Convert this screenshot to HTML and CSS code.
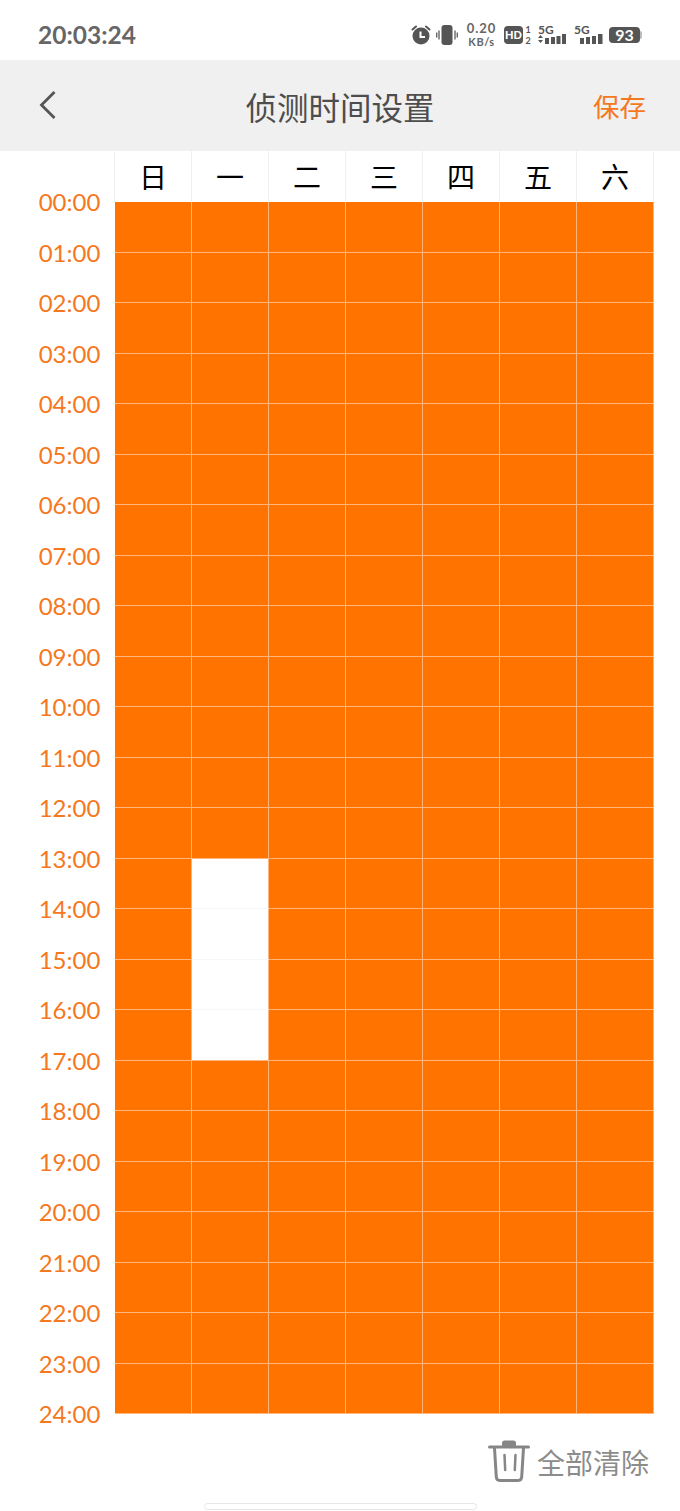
FILE: index.html
```html
<!DOCTYPE html>
<html lang="zh-CN">
<head>
    <meta charset="UTF-8">
    <title>侦测时间设置</title>
    <link rel="stylesheet" href="styles.css">
</head>
<body>
    <div class="status-bar">
        <span class="clock">20:03:24</span>
        <div class="status-icons">
            <svg class="icon-alarm" width="20" height="20" viewBox="0 0 20 20">
                <circle cx="10" cy="11" r="8.500" fill="#555"/>
                <path d="M1.500 4.500 5 1.500M18.500 4.500 15 1.500" stroke="#555" stroke-width="2" stroke-linecap="round"/>
                <path d="M9.500 6.500v5.500h4.500" fill="none" stroke="#fff" stroke-width="2"/>
            </svg>
            <svg class="icon-vibrate" width="22" height="20" viewBox="0 0 22 20">
                <rect x="5.500" y="0" width="11" height="20" rx="3" fill="#555"/>
                <path d="M3 5.500v9M19 5.500v9M.7 7.500v5M21.300 7.500v5" stroke="#666" stroke-width="1.400"/>
            </svg>
            <div class="speed"><span>0.20</span><span class="speed-unit">KB/s</span></div>
            <span class="hd-box">HD</span>
            <span class="hd-nums"><span>1</span><span>2</span></span>
            <div class="signal signal-first">
                <span class="signal-name">5G</span>
                <svg width="28" height="10" viewBox="0 0 28 10">
                    <path d="M0 4h5L2.500 1zM0 6h5L2.500 9z" fill="#555"/>
                    <rect x="7" y="4" width="4" height="6" fill="#555"/>
                    <rect x="13" y="3" width="4" height="7" fill="#555"/>
                    <rect x="18.500" y="2" width="4" height="8" fill="#555"/>
                    <rect x="24" y="0" width="4" height="10" fill="#555"/>
                </svg>
            </div>
            <div class="signal">
                <span class="signal-name">5G</span>
                <svg width="29" height="10" viewBox="0 0 29 10">
                    <rect x="6" y="4" width="4" height="6" fill="#555"/>
                    <rect x="12" y="3" width="4" height="7" fill="#555"/>
                    <rect x="18" y="2" width="4" height="8" fill="#555"/>
                    <rect x="24" y="0" width="4.500" height="10" fill="#555"/>
                </svg>
            </div>
            <div class="battery"><span class="battery-level">93</span><span class="battery-cap"></span></div>
        </div>
    </div>

    <div class="nav-bar">
        <svg class="back" width="18" height="30" viewBox="0 0 18 30">
            <path d="M15.500 2 2.500 15l13 13" fill="none" stroke="#555" stroke-width="2.800"/>
        </svg>
        <h1 class="nav-title">侦测时间设置</h1>
        <span class="nav-save">保存</span>
    </div>

    <div class="schedule">
        <div class="hours">
            <span>00:00</span><span>01:00</span><span>02:00</span><span>03:00</span><span>04:00</span>
            <span>05:00</span><span>06:00</span><span>07:00</span><span>08:00</span><span>09:00</span>
            <span>10:00</span><span>11:00</span><span>12:00</span><span>13:00</span><span>14:00</span>
            <span>15:00</span><span>16:00</span><span>17:00</span><span>18:00</span><span>19:00</span>
            <span>20:00</span><span>21:00</span><span>22:00</span><span>23:00</span><span>24:00</span>
        </div>
        <div class="week">
            <div class="week-head">
                <span>日</span><span>一</span><span>二</span><span>三</span><span>四</span><span>五</span><span>六</span>
            </div>
            <div class="grid">
                <i></i><i></i><i></i><i></i><i></i><i></i><i></i>
                <i></i><i></i><i></i><i></i><i></i><i></i><i></i>
                <i></i><i></i><i></i><i></i><i></i><i></i><i></i>
                <i></i><i></i><i></i><i></i><i></i><i></i><i></i>
                <i></i><i></i><i></i><i></i><i></i><i></i><i></i>
                <i></i><i></i><i></i><i></i><i></i><i></i><i></i>
                <i></i><i></i><i></i><i></i><i></i><i></i><i></i>
                <i></i><i></i><i></i><i></i><i></i><i></i><i></i>
                <i></i><i></i><i></i><i></i><i></i><i></i><i></i>
                <i></i><i></i><i></i><i></i><i></i><i></i><i></i>
                <i></i><i></i><i></i><i></i><i></i><i></i><i></i>
                <i></i><i></i><i></i><i></i><i></i><i></i><i></i>
                <i></i><i></i><i></i><i></i><i></i><i></i><i></i>
                <i></i><i class="off"></i><i></i><i></i><i></i><i></i><i></i>
                <i></i><i class="off"></i><i></i><i></i><i></i><i></i><i></i>
                <i></i><i class="off"></i><i></i><i></i><i></i><i></i><i></i>
                <i></i><i class="off off-last"></i><i></i><i></i><i></i><i></i><i></i>
                <i></i><i></i><i></i><i></i><i></i><i></i><i></i>
                <i></i><i></i><i></i><i></i><i></i><i></i><i></i>
                <i></i><i></i><i></i><i></i><i></i><i></i><i></i>
                <i></i><i></i><i></i><i></i><i></i><i></i><i></i>
                <i></i><i></i><i></i><i></i><i></i><i></i><i></i>
                <i></i><i></i><i></i><i></i><i></i><i></i><i></i>
                <i></i><i></i><i></i><i></i><i></i><i></i><i></i>
            </div>
        </div>
    </div>

    <div class="clear-row">
        <svg class="trash" width="42" height="42" viewBox="0 0 42 42">
            <path d="M1.500 7h39" stroke="#868686" stroke-width="3" stroke-linecap="round"/>
            <path d="M14 6V3C14 1.500 15 .5 16.500 .5h9C27 .5 28 1.500 28 3V6z" fill="#868686"/>
            <path d="M6.500 8l1.800 29c.2 2.500 1.500 3.500 3.500 3.500h18.400c2 0 3.300-1 3.500-3.500L35.500 8" fill="none" stroke="#868686" stroke-width="3"/>
            <path d="M16.500 15l.7 15M27.500 15l-.7 15" stroke="#868686" stroke-width="2.500" stroke-linecap="round"/>
        </svg>
        <span>全部清除</span>
    </div>

    <div class="home-bar"></div>
</body>
</html>
```

FILE: styles.css
```css
* {
    box-sizing: border-box;
}
body {
    margin: 0;
    height: 1511px;
    overflow: hidden;
    background: #fff;
    font-family: "Lato", "Noto Sans CJK SC", sans-serif;
}
.status-bar {
    height: 60px;
    padding: 8px 38px 0 38px;
    display: flex;
    align-items: center;
    justify-content: space-between;
    color: #5f5f5f;
}
.clock {
    font-size: 24.500px;
    font-weight: 700;
    color: #666;
}
.status-icons {
    margin-top: 2px;
    display: flex;
    align-items: center;
    color: #555;
}
.icon-alarm {
    margin-right: 5px;
}
.speed {
    width: 31px;
    margin: 0 7px 0 8px;
    display: flex;
    flex-direction: column;
    align-items: center;
    font-size: 13px;
    font-weight: 700;
    line-height: 15px;
    letter-spacing: 1px;
    color: #666;
}
.speed-unit {
    margin-top: -1px;
    font-size: 11px;
    line-height: 14px;
    letter-spacing: .5px;
}
.hd-box {
    width: 19px;
    height: 18px;
    border-radius: 4px;
    background: #555;
    color: #fff;
    font-size: 11px;
    font-weight: 900;
    line-height: 18px;
    text-align: center;
}
.hd-nums {
    width: 6px;
    margin-left: 2px;
    display: flex;
    flex-direction: column;
    align-items: center;
    font-size: 9px;
    font-weight: 700;
    line-height: 11px;
}
.signal {
    margin-left: 8px;
    display: flex;
    flex-direction: column;
    font-size: 12px;
    font-weight: 700;
    line-height: 8px;
}
.signal svg {
    display: block;
}
.signal-first {
    margin-left: 7px;
}
.battery {
    margin-left: 6px;
    display: flex;
    align-items: center;
}
.battery-level {
    width: 31px;
    height: 16px;
    border-radius: 4px;
    background: #555;
    color: #fff;
    font-size: 16px;
    font-weight: 700;
    line-height: 16px;
    text-align: center;
}
.battery-cap {
    width: 2px;
    height: 8px;
    background: #bbb;
    border-radius: 0 2px 2px 0;
}
.nav-bar {
    height: 91px;
    padding: 0 34px 0 39px;
    display: flex;
    align-items: center;
    justify-content: space-between;
    position: relative;
    background: #f0f0f0;
}
.back {
    display: block;
    margin-bottom: 2px;
}
.nav-title {
    position: absolute;
    left: 0;
    right: 0;
    margin: 0;
    text-align: center;
    font-size: 31.500px;
    font-weight: 400;
    color: #4d4d4d;
}
.nav-save {
    font-size: 26.500px;
    color: #f5781e;
}
.schedule {
    height: 1263px;
    display: flex;
}
.hours {
    width: 115px;
    padding: 26px 15px 0 39px;
    display: flex;
    flex-direction: column;
    align-items: center;
    font-size: 24px;
    color: #f5781e;
}
.hours span {
    flex: none;
    height: 50.500px;
    line-height: 50.500px;
}
.week {
    width: 539px;
}
.week-head {
    height: 51px;
    display: grid;
    grid-template-columns: repeat(7, 77px);
}
.week-head span {
    border-right: 1px solid #f0f0f0;
    box-shadow: -1px 0 0 #f0f0f0;
    padding-top: 1px;
    font-size: 28px;
    line-height: 50px;
    text-align: center;
    color: #000;
}
.grid {
    height: 1212px;
    display: grid;
    grid-template-columns: repeat(7, 77px);
    grid-template-rows: repeat(24, 50.500px);
    background: #ff7300;
}
.grid i {
    border-right: 1px solid #ffb67c;
    border-bottom: 1px solid #ffb67c;
}
.grid .off {
    background: #fff;
    border-bottom-color: #f8f8f8;
}
.grid .off-last {
    border-bottom-color: #ffb67c;
}
.clear-row {
    height: 82px;
    padding: 14px 31px 0 0;
    display: flex;
    align-items: center;
    justify-content: flex-end;
    gap: 7px;
    color: #8c8c8c;
    font-size: 28px;
}
.trash {
    margin-bottom: 2px;
}
.home-bar {
    width: 273px;
    height: 7px;
    margin: 7px auto 0;
    border: 1px solid #e6e6e6;
    border-radius: 4px;
}
```
